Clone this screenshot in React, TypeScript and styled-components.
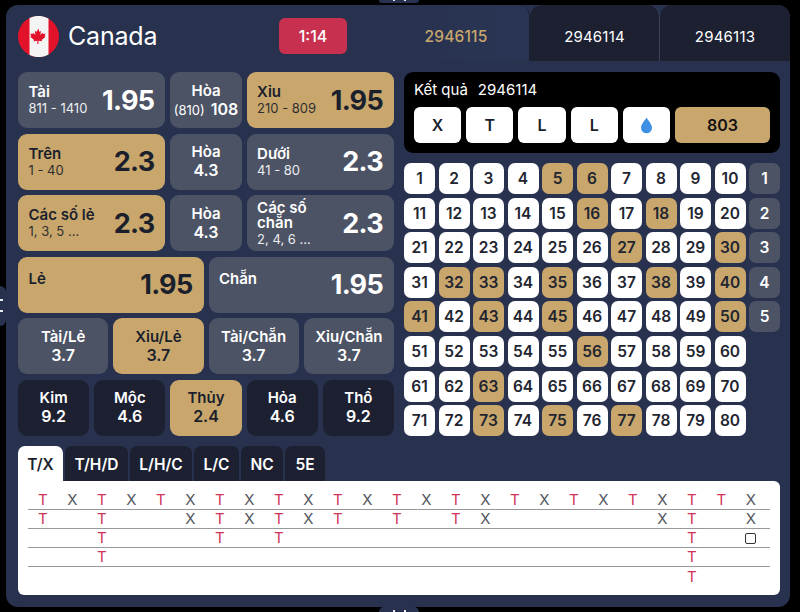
import React from 'react';
import styled, { createGlobalStyle } from 'styled-components';

const Global = createGlobalStyle`
  html, body { margin: 0; padding: 0; background: #000; }
  body { font-family: Inter, "Noto Sans", sans-serif; width: 800px; height: 612px; overflow: hidden; }
  * { box-sizing: border-box; }
`;

const GOLD = '#c9a76c';
const GRAY = '#4c5364';
const DARK = '#1c2031';
const INK = '#1b1f2c';

const Screen = styled.div`
  position: relative;
  width: 800px;
  height: 612px;
  padding: 5px 10px 5px 6px;
`;

const Panel = styled.div`
  width: 784px;
  height: 602px;
  background: #28324f;
  border-radius: 12px;
  overflow: hidden;
`;

const Header = styled.header`
  display: flex;
  height: 56px;
`;

const Brand = styled.div`
  width: 394px;
  display: flex;
  align-items: center;
  padding: 6px 0 0 12px;
`;

const FlagCircle = styled.svg`
  width: 41px;
  height: 41px;
  flex: none;
`;

const Country = styled.div`
  margin-left: 9px;
  width: 211px;
  color: #fff;
  font-size: 25px;
  font-weight: 400;
  letter-spacing: -0.2px;
`;

const Timer = styled.div`
  width: 68px;
  height: 36px;
  border-radius: 6px;
  background: #c8304f;
  color: #fff;
  font-size: 16px;
  font-weight: 500;
  display: flex;
  align-items: center;
  justify-content: center;
  flex: none;
`;

const DrawTabs = styled.div`
  display: grid;
  grid-template-columns: repeat(3, 130px);
`;

const DrawTab = styled.div<{ $active?: boolean }>`
  display: flex;
  align-items: center;
  justify-content: center;
  padding-top: 6px;
  padding-right: ${p => (p.$active ? '17px' : '0')};
  font-size: ${p => (p.$active ? '15.5px' : '15px')};
  letter-spacing: 0.2px;
  border-radius: 0 12px 0 0;
  border-right: 1px solid #39415a;
  color: ${p => (p.$active ? GOLD : '#fff')};
  font-weight: ${p => (p.$active ? 500 : 400)};
  background: ${p => (p.$active ? 'linear-gradient(to right, #28324f, #2a3555)' : DARK)};
  ${p => (p.$active ? `border-right-color: ${DARK};` : '')}
  &:last-child { border-radius: 12px 12px 0 0; border-right: 0; }
  &:nth-child(2) { border-radius: 12px 12px 0 0; }
`;

const Body = styled.div`
  display: grid;
  grid-template-columns: 376px 376px;
  column-gap: 10px;
  padding: 11px 0 0 12px;
`;

const BetGrid = styled.div`
  display: grid;
  grid-template-columns: repeat(20, 1fr);
  grid-auto-rows: 56px;
  column-gap: 5px;
  row-gap: 5.5px;
`;

const Card = styled.div<{ $span: number; $on?: boolean; $dark?: boolean }>`
  grid-column: span ${p => p.$span};
  border-radius: 9px;
  background: ${p => (p.$on ? GOLD : p.$dark ? DARK : GRAY)};
  color: ${p => (p.$on ? INK : '#fff')};
`;

const SideCard = styled(Card)`
  display: flex;
  align-items: center;
  justify-content: space-between;
  padding: 0 11px 0 10.5px;
`;

const CenterCard = styled(Card)`
  display: flex;
  flex-direction: column;
  align-items: center;
  justify-content: center;
  text-align: center;
`;

const SideText = styled.div`
  display: flex;
  flex-direction: column;
  min-width: 0;
`;

const BetLabel = styled.div`
  font-size: 15px;
  font-weight: 600;
  line-height: 15px;
`;

const BetSub = styled.div`
  font-size: 13px;
  font-weight: 400;
  line-height: 15px;
  min-height: 11px;
  margin-top: 2px;
  opacity: 0.9;
  white-space: nowrap;
`;

const Odds = styled.div`
  font-size: 27px;
  font-weight: 700;
  flex: none;
  letter-spacing: -0.7px;
`;

const CenterLabel = styled.div`
  font-size: 15px;
  font-weight: 600;
  line-height: 18px;
`;

const CenterValue = styled.div`
  font-size: 16px;
  font-weight: 600;
  line-height: 19px;
`;

const ValueRow = styled.div`
  display: flex;
  align-items: baseline;
  gap: 6px;
  white-space: nowrap;
`;

const ValueNote = styled.span`
  font-size: 13px;
  font-weight: 400;
`;

const RightCol = styled.div`
  display: flex;
  flex-direction: column;
  gap: 10px;
`;

const Result = styled.div`
  height: 81px;
  background: #000;
  border-radius: 9px;
  padding: 9px 10px 10px;
  display: flex;
  flex-direction: column;
  gap: 8px;
`;

const ResultTitle = styled.div`
  color: #fff;
  font-size: 15px;
  font-weight: 400;
  line-height: 18px;
  display: flex;
  gap: 10px;
`;

const ResultRow = styled.div`
  display: flex;
  gap: 5px;
`;

const ResultChip = styled.div<{ $total?: boolean }>`
  flex: ${p => (p.$total ? 'none' : '1')};
  width: ${p => (p.$total ? '95px' : 'auto')};
  height: 36px;
  border-radius: 6px;
  background: ${p => (p.$total ? GOLD : '#fff')};
  color: ${p => (p.$total ? '#111' : INK)};
  font-size: 16px;
  font-weight: 600;
  display: flex;
  align-items: center;
  justify-content: center;
`;

const NumberGrid = styled.div`
  display: grid;
  grid-template-columns: repeat(11, 31px);
  grid-auto-rows: 31px;
  column-gap: 3.5px;
  row-gap: 3.6px;
`;

const Ball = styled.div<{ $on?: boolean; $side?: boolean }>`
  border-radius: 7px;
  display: flex;
  align-items: center;
  justify-content: center;
  font-size: 15.5px;
  font-weight: 600;
  background: ${p => (p.$side ? GRAY : p.$on ? GOLD : '#fff')};
  color: ${p => (p.$side ? '#fff' : '#222530')};
`;

const Lower = styled.section`
  margin: 10px 10px 0 12px;
`;

const RoadTabs = styled.div`
  display: flex;
  gap: 2px;
  height: 35px;
`;

const RoadTab = styled.div<{ $active?: boolean; $w: number }>`
  width: ${p => p.$w}px;
  border-radius: 7px 7px 0 0;
  padding-top: 2px;
  display: flex;
  align-items: center;
  justify-content: center;
  font-size: 15.5px;
  font-weight: 600;
  background: ${p => (p.$active ? '#fff' : DARK)};
  color: ${p => (p.$active ? INK : '#fff')};
`;

const Road = styled.div`
  height: 114px;
  background: #fff;
  border-radius: 0 6px 6px 6px;
  padding: 10px 10px 0;
`;

const RoadRow = styled.div<{ $last?: boolean }>`
  display: grid;
  grid-template-columns: repeat(25, 29.5px);
  height: 19px;
  border-bottom: ${p => (p.$last ? '0' : '1px solid #98989b')};
`;

const Mark = styled.div<{ $t?: boolean }>`
  display: flex;
  align-items: center;
  justify-content: center;
  font-size: 15px;
  font-weight: 400;
  line-height: 18px;
  color: ${p => (p.$t ? '#cf3358' : '#555860')};
`;

const EmptyBox = styled.span`
  width: 11px;
  height: 11px;
  border: 1.5px solid #333;
  border-radius: 2px;
`;

const Handle = styled.div<{ $side: 'left' | 'top' | 'bottom' }>`
  position: absolute;
  background: #28324f;
  ${p => p.$side === 'left' && 'left: 0; top: 286px; width: 6px; height: 40px; border-radius: 0 6px 6px 0;'}
  ${p => p.$side === 'top' && 'left: 379px; top: 0; width: 40px; height: 3px; border-radius: 0 0 7px 7px;'}
  ${p => p.$side === 'bottom' && 'left: 379px; top: 607px; width: 40px; height: 5px; border-radius: 7px 7px 0 0;'}
  &::before, &::after {
    content: '';
    position: absolute;
    background: #e8eaf0;
  }
  ${p => p.$side === 'left' && `
    &::before { left: 0; top: 13px; width: 3px; height: 2px; }
    &::after { left: 0; top: 24px; width: 3px; height: 2px; }
  `}
  ${p => p.$side === 'top' && `
    &::before { left: 14px; top: 0; width: 2px; height: 1px; }
    &::after { left: 25px; top: 0; width: 2px; height: 1px; }
  `}
  ${p => p.$side === 'bottom' && `
    &::before { left: 14px; bottom: 0; width: 2px; height: 2px; }
    &::after { left: 25px; bottom: 0; width: 2px; height: 2px; }
  `}
`;

const Flag = () => (
  <FlagCircle viewBox="0 0 41 41">
    <circle cx="20.5" cy="20.5" r="20.5" fill="#e3122b" />
    <path d="M11.5 2.1 A20.5 20.5 0 0 1 30.5 2.6 V38.4 A20.5 20.5 0 0 1 11.5 38.9 Z" fill="#f4f4f4" />
    <path
      d="M20.5 12.5l-1.9 3.3-1.8-.9.7 4.2-2.3-2.4-.4 1.3-2.5-.4.9 2.7-1 .5 3.9 3.1-.5 1.4 3.7-.6.1 3.3h1l.1-3.3 3.7.6-.5-1.4 3.9-3.1-1-.5.9-2.7-2.5.4-.4-1.3-2.3 2.4.7-4.2-1.8.9z"
      fill="#e3122b"
    />
  </FlagCircle>
);

const Drop = () => (
  <svg width="13" height="17" viewBox="0 0 13 17">
    <path d="M6.5 0.5C5 3.5 1 7 1 10.8A5.5 5.5 0 0 0 12 10.8C12 7 8 3.5 6.5 0.5Z" fill="#3f8fe2" />
  </svg>
);

const GOLD_BALLS = new Set([5, 6, 16, 18, 27, 30, 32, 33, 35, 38, 40, 41, 43, 45, 50, 56, 63, 73, 75, 77]);

const ROAD: string[] = [
  'TXTXTXTXTXTXTXTXTXTXTXTTX',
  'T.T..XTXTXT.T.TX.....XT.X',
  '..T...T.T.............T.O',
  '..T...................T..',
  '......................T..',
];

const TABS: [string, number][] = [
  ['T/X', 45], ['T/H/D', 63], ['L/H/C', 62], ['L/C', 45], ['NC', 42], ['5E', 40],
];

export default function App() {
  const balls: React.ReactNode[] = [];
  for (let r = 0; r < 8; r++) {
    for (let c = 1; c <= 10; c++) {
      const n = r * 10 + c;
      balls.push(<Ball key={n} $on={GOLD_BALLS.has(n)}>{n}</Ball>);
    }
    balls.push(r < 5 ? <Ball key={`s${r}`} $side>{r + 1}</Ball> : <span key={`s${r}`} />);
  }
  return (
    <Screen>
      <Global />
      <Handle $side="left" />
      <Handle $side="top" />
      <Handle $side="bottom" />
      <Panel>
        <Header>
          <Brand>
            <Flag />
            <Country>Canada</Country>
            <Timer>1:14</Timer>
          </Brand>
          <DrawTabs>
            <DrawTab $active>2946115</DrawTab>
            <DrawTab>2946114</DrawTab>
            <DrawTab>2946113</DrawTab>
          </DrawTabs>
        </Header>
        <Body>
          <BetGrid>
            <SideCard $span={8}>
              <SideText><BetLabel>Tài</BetLabel><BetSub>811 - 1410</BetSub></SideText>
              <Odds>1.95</Odds>
            </SideCard>
            <CenterCard $span={4}>
              <CenterLabel>Hòa</CenterLabel>
              <ValueRow><ValueNote>(810)</ValueNote><CenterValue>108</CenterValue></ValueRow>
            </CenterCard>
            <SideCard $span={8} $on>
              <SideText><BetLabel>Xỉu</BetLabel><BetSub>210 - 809</BetSub></SideText>
              <Odds>1.95</Odds>
            </SideCard>

            <SideCard $span={8} $on>
              <SideText><BetLabel>Trên</BetLabel><BetSub>1 - 40</BetSub></SideText>
              <Odds>2.3</Odds>
            </SideCard>
            <CenterCard $span={4}>
              <CenterLabel>Hòa</CenterLabel>
              <CenterValue>4.3</CenterValue>
            </CenterCard>
            <SideCard $span={8}>
              <SideText><BetLabel>Dưới</BetLabel><BetSub>41 - 80</BetSub></SideText>
              <Odds>2.3</Odds>
            </SideCard>

            <SideCard $span={8} $on>
              <SideText><BetLabel>Các số lẻ</BetLabel><BetSub>1, 3, 5 ...</BetSub></SideText>
              <Odds>2.3</Odds>
            </SideCard>
            <CenterCard $span={4}>
              <CenterLabel>Hòa</CenterLabel>
              <CenterValue>4.3</CenterValue>
            </CenterCard>
            <SideCard $span={8}>
              <SideText><BetLabel>Các số chẵn</BetLabel><BetSub>2, 4, 6 ...</BetSub></SideText>
              <Odds>2.3</Odds>
            </SideCard>

            <SideCard $span={10} $on>
              <SideText><BetLabel>Lẻ</BetLabel><BetSub /></SideText>
              <Odds>1.95</Odds>
            </SideCard>
            <SideCard $span={10}>
              <SideText><BetLabel>Chẵn</BetLabel><BetSub /></SideText>
              <Odds>1.95</Odds>
            </SideCard>

            <CenterCard $span={5}><CenterLabel>Tài/Lẻ</CenterLabel><CenterValue>3.7</CenterValue></CenterCard>
            <CenterCard $span={5} $on><CenterLabel>Xỉu/Lẻ</CenterLabel><CenterValue>3.7</CenterValue></CenterCard>
            <CenterCard $span={5}><CenterLabel>Tài/Chẵn</CenterLabel><CenterValue>3.7</CenterValue></CenterCard>
            <CenterCard $span={5}><CenterLabel>Xỉu/Chẵn</CenterLabel><CenterValue>3.7</CenterValue></CenterCard>

            <CenterCard $span={4} $dark><CenterLabel>Kim</CenterLabel><CenterValue>9.2</CenterValue></CenterCard>
            <CenterCard $span={4} $dark><CenterLabel>Mộc</CenterLabel><CenterValue>4.6</CenterValue></CenterCard>
            <CenterCard $span={4} $on><CenterLabel>Thủy</CenterLabel><CenterValue>2.4</CenterValue></CenterCard>
            <CenterCard $span={4} $dark><CenterLabel>Hỏa</CenterLabel><CenterValue>4.6</CenterValue></CenterCard>
            <CenterCard $span={4} $dark><CenterLabel>Thổ</CenterLabel><CenterValue>9.2</CenterValue></CenterCard>
          </BetGrid>
          <RightCol>
            <Result>
              <ResultTitle><span>Kết quả</span><span>2946114</span></ResultTitle>
              <ResultRow>
                <ResultChip>X</ResultChip>
                <ResultChip>T</ResultChip>
                <ResultChip>L</ResultChip>
                <ResultChip>L</ResultChip>
                <ResultChip><Drop /></ResultChip>
                <ResultChip $total>803</ResultChip>
              </ResultRow>
            </Result>
            <NumberGrid>{balls}</NumberGrid>
          </RightCol>
        </Body>
        <Lower>
          <RoadTabs>
            {TABS.map(([t, w], i) => (
              <RoadTab key={t} $w={w} $active={i === 0}>{t}</RoadTab>
            ))}
          </RoadTabs>
          <Road>
            {ROAD.map((line, i) => (
              <RoadRow key={i} $last={i === 4}>
                {line.split('').map((ch, j) => (
                  <Mark key={j} $t={ch === 'T'}>
                    {ch === 'T' || ch === 'X' ? ch : null}
                    {ch === 'O' ? <EmptyBox /> : null}
                  </Mark>
                ))}
              </RoadRow>
            ))}
          </Road>
        </Lower>
      </Panel>
    </Screen>
  );
}
